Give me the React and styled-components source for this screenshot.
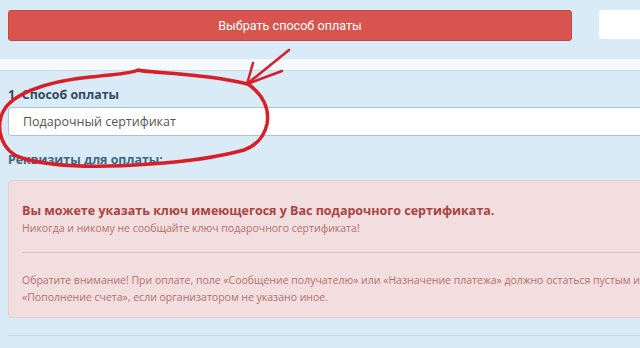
import styled, { createGlobalStyle } from "styled-components";

const GlobalStyle = createGlobalStyle`
  body {
    margin: 0;
    background: #d8ebf6;
    font-family: "Open Sans", "Noto Sans", sans-serif;
    overflow: hidden;
  }
`;

const Page = styled.div`
  position: relative;
  width: 640px;
  height: 348px;
  overflow: hidden;
`;

const TopBar = styled.div`
  display: flex;
  align-items: flex-start;
  gap: 27px;
  padding: 10px 0 0 8px;
  height: 59px;
  box-sizing: border-box;
`;

const PayButton = styled.button`
  flex: 0 0 564px;
  height: 31px;
  border: 1px solid #c9443f;
  border-radius: 3px;
  background: #d8544f;
  color: #fff;
  font-family: Roboto, "Liberation Sans", sans-serif;
  font-size: 12.6px;
  cursor: pointer;
`;

const SideBox = styled.div`
  flex: 0 0 60px;
  height: 29px;
  background: #fff;
  border-radius: 3px;
`;

const Band = styled.div`
  height: 11px;
  background: #f5f9fc;
  border-bottom: 1px solid #c8dde9;
`;

const Section = styled.div`
  width: 760px;
  padding: 15px 0 0 8px;
`;

const Label = styled.div`
  font-size: 12.4px;
  line-height: 18px;
  font-weight: 700;
  color: ${(p) => p.$color || "#34495e"};
  margin-top: ${(p) => p.$top || 0}px;
`;

const Select = styled.div`
  margin-top: 3px;
  height: 29px;
  box-sizing: border-box;
  border: 1px solid #adc2d7;
  border-radius: 3px;
  background: #fff;
  padding-left: 14px;
  display: flex;
  align-items: center;
  font-size: 12.5px;
  color: #555;
`;

const Alert = styled.div`
  margin-top: 11px;
  height: 138px;
  box-sizing: border-box;
  border: 1px solid #ebcdd1;
  border-radius: 4px;
  background: #f2dede;
  padding: 21px 0 0 13px;
`;

const AlertTitle = styled.div`
  font-size: 12.5px;
  line-height: 18px;
  font-weight: 700;
  color: #a94442;
`;

const AlertText = styled.div`
  font-size: 10.5px;
  line-height: ${(p) => p.$lh || 16}px;
  color: #b2706d;
  white-space: nowrap;
  margin-top: ${(p) => p.$top || 0}px;
`;

const Rule = styled.div`
  margin-top: 16px;
  border-top: 1px solid #dcc2c6;
`;

const BottomLine = styled.div`
  margin-top: 17px;
  border-top: 1px solid #c3dcea;
`;

const Ink = styled.svg`
  position: absolute;
  left: 0;
  top: 0;
  pointer-events: none;
`;

const App = () => (
  <Page>
    <GlobalStyle />
    <TopBar>
      <PayButton>Выбрать способ оплаты</PayButton>
      <SideBox />
    </TopBar>
    <Band />
    <Section>
      <Label>1. Способ оплаты</Label>
      <Select>Подарочный сертификат</Select>
      <Label $top={15} $color="#3d6783">Реквизиты для оплаты:</Label>
      <Alert>
        <AlertTitle>Вы можете указать ключ имеющегося у Вас подарочного сертификата.</AlertTitle>
        <AlertText>Никогда и никому не сообщайте ключ подарочного сертификата!</AlertText>
        <Rule />
        <AlertText $top={19} $lh={17}>
          Обратите внимание! При оплате, поле «Сообщение получателю» или «Назначение платежа» должно остаться пустым или
          <br />
          «Пополнение счета», если организатором не указано иное.
        </AlertText>
      </Alert>
      <BottomLine />
    </Section>

    {/* red marker annotation */}
    <Ink width="640" height="348" viewBox="0 0 640 348">
      <g fill="none" stroke="#d81e27" strokeLinecap="round" strokeLinejoin="round">
        <path
          strokeWidth="3.5"
          d="M248 84 C262 94 270 108 267 124 C264 138 255 146 244 150 C215 158 180 162 150 164 C110 167 55 168 22 158 C2 152 -6 128 4 110 C12 96 40 82 90 77 C115 74 130 74 138 70 C146 73 200 72 248 84"
        />
        <path strokeWidth="2.5" d="M289 50 L247 84" />
        <path strokeWidth="2.5" d="M253 63 L247 84 L282 71" />
      </g>
    </Ink>
  </Page>
);

export default App;
